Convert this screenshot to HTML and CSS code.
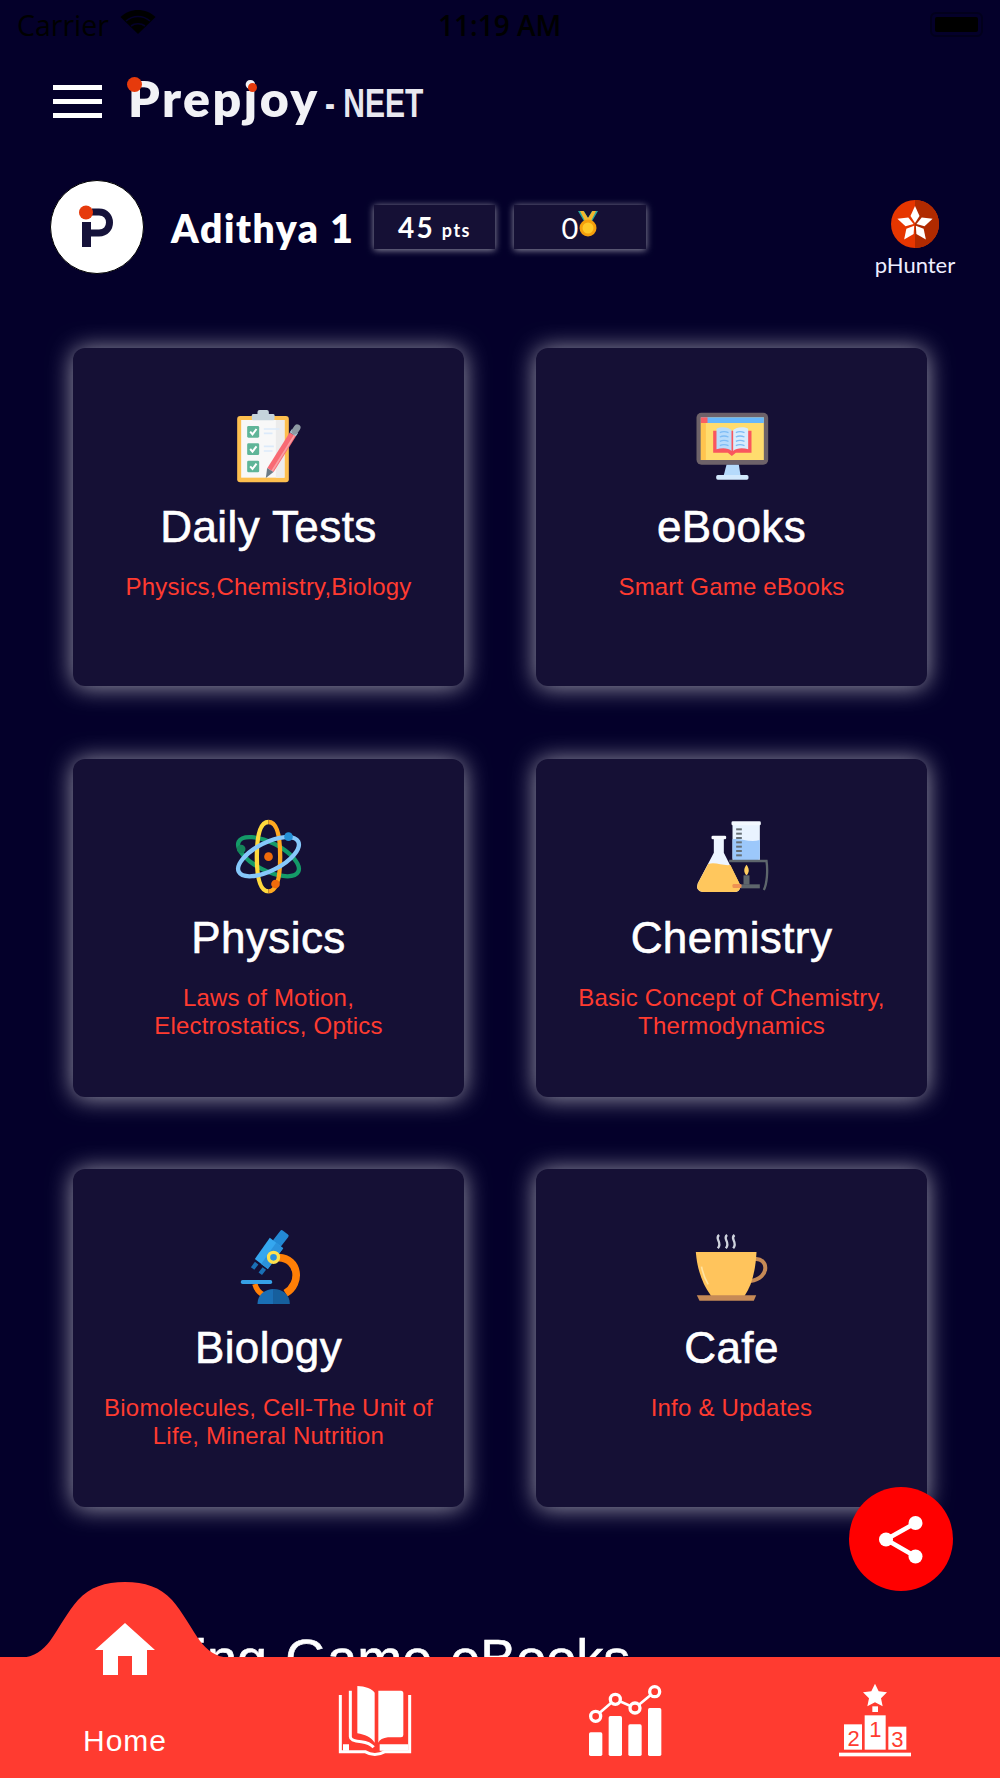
FILE: index.html
```html
<!DOCTYPE html>
<html lang="en">
<head>
<meta charset="utf-8">
<title>Prepjoy NEET</title>
<link rel="stylesheet" href="styles.css">
</head>
<body>
<div class="page">
  <div class="status">
    <div class="status-left"><span class="carrier">Carrier</span>
      <svg class="wifi" width="36" height="26" viewBox="0 0 36 26"><path d="M18 25 L0.500 8 C10 -1.500 26 -1.500 35.500 8 Z" fill="#000"/><path d="M6 12 C13 6 23 6 30 12" stroke="#04002a" stroke-width="1.600" fill="none"/><path d="M11 17 C15 14 21 14 25 17" stroke="#04002a" stroke-width="1.600" fill="none"/></svg>
    </div>
    <span class="time">11:19 AM</span>
    <div class="battery"><div class="battery-fill"></div></div>
  </div>

  <header class="topbar">
    <div class="burger"><span></span><span></span><span></span></div>
    <div class="logo"><span class="logo-dot"></span><span class="logo-dot2"></span><span class="logo-word">Prepjoy</span><span class="logo-neet">- NEET</span></div>
  </header>

  <section class="profile">
    <div class="avatar">
      <svg width="60" height="60" viewBox="0 0 60 60"><path d="M19.500 25 V50" stroke="#15123a" stroke-width="9" fill="none"/><path d="M25 15 H32 C46 15 46 36 32 36 H24" stroke="#15123a" stroke-width="7" fill="none"/><circle cx="19" cy="15.500" r="7" fill="#e63a0c"/></svg>
    </div>
    <div class="name">Adithya 1</div>
    <div class="chip chip-pts"><span class="num">45</span><span class="pts">pts</span></div>
    <div class="chip chip-medal"><span class="zero">0</span>
      <svg width="20" height="26" viewBox="0 0 20 26"><path d="M0 0 L7 12 H13 L20 0 H14 L10 7 L6 0 Z" fill="#2aa7a0"/><path d="M2 0 L8 12 H12 L18 0 H14.500 L10 7 L5.500 0 Z" fill="#f3b52c"/><circle cx="10" cy="17" r="8.500" fill="#f59f0c"/><circle cx="10" cy="17" r="5.500" fill="#ffc928"/></svg>
    </div>
    <div class="hunter">
      <svg width="48" height="48" viewBox="0 0 48 48"><circle cx="24" cy="24" r="24" fill="#e63600"/><path d="M24 0 A24 24 0 0 1 24 48 Z" fill="#b02a00"/><g fill="#fff"><polygon points="24,6 28.500,16 24,23 19.500,16"/><polygon points="24,6 28.500,16 24,23 19.500,16" transform="rotate(72 24 24.500)"/><polygon points="24,6 28.500,16 24,23 19.500,16" transform="rotate(144 24 24.500)"/><polygon points="24,6 28.500,16 24,23 19.500,16" transform="rotate(216 24 24.500)"/><polygon points="24,6 28.500,16 24,23 19.500,16" transform="rotate(288 24 24.500)"/></g></svg>
      <span>pHunter</span>
    </div>
  </section>

  <main class="grid">
    <article class="card">
      <svg class="icon" viewBox="-4.500 0 360 330">
        <rect x="80" y="78" width="155" height="199" rx="9" fill="#fdbf4f"/>
        <rect x="92" y="90" width="130" height="173" fill="#f8f8f8"/><rect x="196" y="90" width="26" height="173" fill="#ececec"/>
        <rect x="124" y="72" width="68" height="19" rx="4" fill="#c4d3db"/><rect x="141" y="60" width="34" height="16" rx="6" fill="#c4d3db"/>
        <g fill="#5fb598"><rect x="110" y="108" width="36" height="35" rx="4"/><rect x="110" y="160" width="36" height="35" rx="4"/><rect x="110" y="212" width="36" height="35" rx="4"/></g>
        <g stroke="#fff" stroke-width="6" fill="none"><path d="M119 125 L126 133 L138 117"/><path d="M119 177 L126 185 L138 169"/><path d="M119 229 L126 237 L138 221"/></g>
        <g stroke="#dceafa" stroke-width="5"><path d="M160 117H207M160 130H186M160 169H190M160 183H186"/></g>
        <path d="M180 240 L247 133" stroke="#f86a74" stroke-width="22"/><path d="M180 240 L247 133" stroke="#f9a0a5" stroke-width="5" transform="translate(5 3)"/>
        <path d="M247 133 L253 124" stroke="#b7dbe4" stroke-width="22"/><path d="M253 124 L260 113" stroke="#8d9aa3" stroke-width="20" stroke-linecap="round"/>
        <polygon points="170,234 189,246 166,264" fill="#6d7b85"/>
      </svg>
      <h2>Daily Tests</h2>
      <p>Physics,Chemistry,Biology</p>
    </article>
    <article class="card">
      <svg class="icon" viewBox="4.500 0 360 330">
        <rect x="78" y="68" width="215" height="156" rx="15" fill="#6d6269"/>
        <rect x="91" y="82" width="189" height="128" fill="#ffdc6e"/><rect x="91" y="98" width="15" height="112" fill="#ffc44f"/>
        <rect x="91" y="82" width="189" height="17" fill="#66b7fb"/><rect x="91" y="82" width="20" height="17" fill="#f95e63"/>
        <path d="M128 122 H243 V188 H196 L184 198 L172 188 H128 Z" fill="#f9565e"/>
        <path d="M138 116 C155 108 175 112 183 120 V183 C175 174 155 172 138 178 Z" fill="#b9dcfb"/><path d="M188 120 C196 112 218 108 233 116 V178 C218 172 196 174 188 183 Z" fill="#d8ecfd"/>
        <g stroke="#7dbcf5" stroke-width="4" fill="none"><path d="M148 128q12-6 26 0M148 141q12-6 26 0M148 154q12-6 26 0M148 167q12-6 26 0M196 128q12-6 26 0M196 141q12-6 26 0M196 154q12-6 26 0M196 167q12-6 26 0"/></g>
        <polygon points="168,224 205,224 210,255 160,255" fill="#b5dafb"/><rect x="137" y="255" width="97" height="14" rx="5" fill="#d2e9fd"/>
      </svg>
      <h2>eBooks</h2>
      <p>Smart Game eBooks</p>
    </article>
    <article class="card">
      <svg class="icon" viewBox="-4.500 3 360 330">
        <g fill="none" stroke-width="13">
          <ellipse cx="174" cy="170" rx="100" ry="42" transform="rotate(27 174 170)" stroke="#149a68"/>
          <path d="M174 66 C145 66 139 120 139 170 C139 220 145 274 174 274" stroke="#ffd93d"/><path d="M174 66 C203 66 209 120 209 170 C209 220 203 274 174 274" stroke="#ffa820"/>
          <ellipse cx="174" cy="170" rx="100" ry="42" transform="rotate(-27 174 170)" stroke="#86c8fb"/>
        </g>
        <circle cx="174" cy="170" r="13" fill="#ef6a0b"/><circle cx="234" cy="110" r="13" fill="#2490d6"/><circle cx="92" cy="147" r="13" fill="#15845a"/><circle cx="195" cy="252" r="13" fill="#ef6a0b"/>
      </svg>
      <h2>Physics</h2>
      <p>Laws of Motion,<br>Electrostatics, Optics</p>
    </article>
    <article class="card">
      <svg class="icon" viewBox="4.500 3 360 330">
        <rect x="186" y="70" width="82" height="110" fill="#e9f3ff"/>
        <path d="M186 118 C210 112 235 130 268 120 V174 Q268 180 262 180 H192 Q186 180 186 174 Z" fill="#9cc8fb"/>
        <rect x="183" y="64" width="88" height="12" rx="4" fill="#f3f8ff"/>
        <g fill="#666f75"><rect x="197" y="85" width="17" height="6"/><rect x="197" y="98" width="17" height="6"/><rect x="197" y="111" width="17" height="6"/><rect x="197" y="124" width="17" height="6"/><rect x="197" y="137" width="17" height="6"/><rect x="197" y="150" width="17" height="6"/><rect x="197" y="163" width="17" height="6"/></g>
        <path d="M176 183 H288 C292 210 290 250 280 270" stroke="#5e666c" stroke-width="7" fill="none"/>
        <rect x="210" y="253" width="58" height="12" fill="#5e666c"/><rect x="219" y="226" width="18" height="28" fill="#5e666c"/>
        <path d="M228 194 C236 205 238 216 228 226 C218 216 220 205 228 194 Z" fill="#ffcf5f"/>
        <path d="M130 112 H160 V158 L206 250 Q214 272 196 276 H96 Q74 272 82 250 L130 158 Z" fill="#edf5ff"/>
        <rect x="123" y="107" width="44" height="11" rx="4" fill="#f8fbff"/>
        <path d="M113 192 C135 185 155 198 180 195 L208 252 Q214 272 196 276 H96 Q74 272 82 250 Z" fill="#ffc75d"/>
        <rect x="186" y="252" width="27" height="12" rx="4" fill="#ee9152"/>
      </svg>
      <h2>Chemistry</h2>
      <p>Basic Concept of Chemistry, Thermodynamics</p>
    </article>
    <article class="card">
      <svg class="icon" viewBox="-4.500 -12 360 330">
        <path d="M205 128 C265 130 275 205 225 235" stroke="#ff7f06" stroke-width="23" fill="none"/>
        <path d="M133 207 C138 225 148 235 160 240" stroke="#ff7f06" stroke-width="16" fill="none"/>
        <rect x="91" y="195" width="94" height="12" rx="5" fill="#36a0e6"/>
        <path d="M141 267 C141 238 165 222 190 222 V267 Z" fill="#1a6fb5"/><path d="M190 222 C215 222 238 238 238 267 H190 Z" fill="#165f9d"/>
        <rect x="126" y="142" width="13" height="20" transform="rotate(37 132 152)" fill="#1a6fb5"/><rect x="149" y="158" width="13" height="20" transform="rotate(37 155 168)" fill="#1a6fb5"/>
        <rect x="196" y="48" width="30" height="44" rx="5" transform="rotate(38 211 70)" fill="#2389d4"/>
        <polygon points="178,68 218,100 172,162 133,132" fill="#35a7ef"/><polygon points="197,83 218,100 172,162 152,147" fill="#2b92dc"/>
        <circle cx="189" cy="127" r="15" fill="#2b92dc" stroke="#ffe14d" stroke-width="10"/>
      </svg>
      <h2>Biology</h2>
      <p>Biomolecules, Cell-The Unit of Life, Mineral Nutrition</p>
    </article>
    <article class="card">
      <svg class="icon" viewBox="4.500 -12 360 330">
        <path d="M250 133 C295 125 300 190 240 198" stroke="#c68a56" stroke-width="12" fill="none"/>
        <path d="M76 111 H258 C255 165 245 210 222 243 H122 C97 210 80 165 76 111 Z" fill="#ffc45c"/>
        <path d="M93 155 C97 175 103 192 113 208" stroke="#ffe39f" stroke-width="5" fill="none"/>
        <polygon points="79,241 257,241 250,257 87,257" fill="#c68a56"/>
        <g stroke="#cfd3dd" stroke-width="7" fill="none"><path d="M146 60 C130 72 158 80 142 100"/><path d="M170 60 C154 72 182 80 166 100"/><path d="M192 60 C176 72 204 80 188 100"/></g>
      </svg>
      <h2>Cafe</h2>
      <p>Info &amp; Updates</p>
    </article>
  </main>

  <h1 class="section-title">Trending Game eBooks</h1>

  <button class="fab" aria-label="Share">
    <svg width="104" height="104" viewBox="0 0 104 104"><path d="M66.500 36 L37 52.500 L66.500 69.500" stroke="#fff" stroke-width="4.500" fill="none"/><circle cx="66.500" cy="36" r="7" fill="#fff"/><circle cx="37" cy="52.500" r="7" fill="#fff"/><circle cx="66.500" cy="69.500" r="7" fill="#fff"/></svg>
  </button>

  <nav class="tabbar">
    <div class="tab tab-home">
      <svg class="hump" width="250" height="76" viewBox="0 0 250 76"><path d="M20 76 C35 75 43 68 50 59 C58 48 68 29 78 18 C90 5 105 0 125 0 C145 0 160 5 172 18 C182 29 192 48 200 59 C207 68 215 75 230 76 Z" fill="#ff3b30"/></svg>
      <svg class="home-icon" width="60" height="52" viewBox="0 0 60 52"><path d="M30 0 L60 27 H52 V52 H37 V33 H23 V52 H8 V27 H0 Z" fill="#fff"/></svg>
      <span class="home-label">Home</span>
    </div>
    <div class="tab">
      <svg class="tab-icon" viewBox="976 351 300 300">
        <path d="M1073 378 C1095 378 1120 388 1125 398 V548 C1115 532 1095 523 1073 520 Z" fill="#fff"/>
        <path d="M1136 392 H1204 Q1211 392 1211 400 V525 Q1211 532 1204 532 H1165 Q1142 535 1136 548 Z" fill="#fff"/>
        <path d="M1052 392 V530 Q1052 543 1085 545 Q1110 548 1122 562" stroke="#fff" stroke-width="9" fill="none"/>
        <path d="M1022 405 V575 H1096 Q1125 592 1156 575 H1230 V405" stroke="#fff" stroke-width="9" fill="none"/>
        <path d="M1030 553 H1048 V572 H1030 Z M1140 553 H1226 V572 H1140 Z" fill="#fff"/>
      </svg>
    </div>
    <div class="tab">
      <svg class="tab-icon" viewBox="226 650 300 300">
        <g fill="#fff"><rect x="268" y="816" width="40" height="71" rx="5"/><rect x="327" y="767" width="40" height="120" rx="5"/><rect x="386" y="792" width="40" height="95" rx="5"/><rect x="445" y="743" width="40" height="144" rx="5"/></g>
        <path d="M288 768 L347 717 L406 743 L465 694" stroke="#fff" stroke-width="8" fill="none"/>
        <g fill="#ff3b30" stroke="#fff" stroke-width="10"><circle cx="288" cy="768" r="15"/><circle cx="347" cy="717" r="15"/><circle cx="406" cy="743" r="15"/><circle cx="465" cy="694" r="15"/></g>
      </svg>
    </div>
    <div class="tab">
      <svg class="tab-icon" viewBox="976 650 300 300">
        <polygon points="1126,670 1137,693 1162,696 1144,714 1149,738 1126,726 1103,738 1108,714 1090,696 1115,693" fill="#fff"/>
        <rect x="1118" y="738" width="17" height="17" fill="#fff"/>
        <g fill="#fff"><rect x="1095" y="765" width="63" height="103"/><rect x="1033" y="792" width="54" height="76"/><rect x="1166" y="799" width="54" height="69"/><rect x="1018" y="877" width="216" height="11"/></g>
        <g class="rank"><text x="1127" y="830" text-anchor="middle">1</text><text x="1062" y="857" text-anchor="middle">2</text><text x="1193" y="859" text-anchor="middle">3</text></g>
      </svg>
    </div>
  </nav>
</div>
</body>
</html>
```

FILE: styles.css
```css
* { box-sizing: border-box; }
html, body { margin: 0; padding: 0; }
body { background: #04002a; font-family: "Liberation Sans", Arial, sans-serif; }

.page {
  position: relative;
  width: 1000px;
  height: 1778px;
  overflow: hidden;
  background: #04002a;
  color: #fff;
}

/* status bar */
.status {
  display: flex;
  align-items: center;
  justify-content: space-between;
  height: 50px;
  padding: 0 17px;
  color: #000;
  position: relative;
}
.status-left { display: flex; align-items: center; gap: 11px; }
.carrier { font: 400 28.500px "Open Sans", sans-serif; }
.wifi { margin-top: -6px; }
.time { position: absolute; left: 438px; top: 7px; font: 600 28px/36px "Open Sans", sans-serif; }
.battery {
  width: 53px;
  height: 25px;
  border: 2px solid #02001c;
  border-radius: 6px;
  padding: 3px;
  margin-top: -2px;
}
.battery-fill { width: 100%; height: 100%; background: #000; border-radius: 2px; }

/* header */
.topbar {
  display: flex;
  align-items: center;
  gap: 26px;
  padding: 20px 0 0 53px;
  height: 82px;
}
.burger { display: flex; flex-direction: column; gap: 9px; width: 49px; }
.burger span { display: block; height: 5px; background: #fff; }
.logo { position: relative; display: flex; align-items: baseline; height: 60px; margin-top: -4px; }
.logo-word { font: 800 50px/58px "Lato", sans-serif; letter-spacing: 2.500px; color: #f2f2f6; }
.logo-neet {
  display: inline-block;
  font: 700 40px/58px "Liberation Sans", sans-serif;
  margin-left: 5px;
  color: #e8e8f0;
  transform: scaleX(0.75);
  transform-origin: left center;
}
.logo-dot { position: absolute; left: -1px; top: 8px; width: 15px; height: 15px; border-radius: 50%; background: #e63a0c; }
.logo-dot2 { position: absolute; left: 120px; top: 14px; width: 9px; height: 9px; border-radius: 50%; background: #e63a0c; }

/* profile */
.profile {
  display: flex;
  align-items: center;
  height: 92px;
  margin-top: 49px;
  padding: 0 43px 0 50px;
}
.avatar {
  width: 94px;
  height: 94px;
  border-radius: 50%;
  background: #fff;
  border: 1px solid #000;
  display: flex;
  align-items: center;
  justify-content: center;
  flex: none;
}
.name { margin-left: 27px; width: 182px; padding-top: 2px; font: 800 39px/48px "Lato", sans-serif; letter-spacing: 1.600px; white-space: nowrap; }
.chip {
  display: flex;
  align-items: center;
  justify-content: center;
  height: 44px;
  background: #151035;
  box-shadow: 0 1px 7px rgba(255, 255, 255, 0.6);
}
.chip-pts { width: 121px; margin-left: 21px; gap: 7px; }
.chip-medal { width: 132px; margin-left: 19px; }
.num { font: 700 28px "Lato", sans-serif; letter-spacing: 2.200px; }
.pts { font: 700 18px "Lato", sans-serif; letter-spacing: 1.500px; margin-top: 6px; }
.zero { font: 400 29px "Lato", sans-serif; }
.chip-medal svg { margin-top: -6px; }
.hunter {
  margin-left: auto;
  width: 84px;
  align-self: flex-start;
  margin-top: 19px;
  display: flex;
  flex-direction: column;
  align-items: center;
  gap: 3px;
}
.hunter span { font: 400 22px/28px "Lato", sans-serif; color: #eef; }

/* cards */
.grid {
  display: grid;
  grid-template-columns: repeat(2, 391px);
  grid-auto-rows: 338px;
  gap: 72.500px 72px;
  padding: 0 73px;
  margin-top: 75px;
}
.card {
  background: #151035;
  border-radius: 12px;
  box-shadow: 0 1px 24px rgba(255, 255, 255, 0.62);
  padding: 42px 24px 0;
  text-align: center;
}
.icon { display: block; width: 120px; height: 110px; margin: 0 auto; }
.card h2 {
  margin: 0;
  font: 400 44px/54px "Liberation Sans", sans-serif;
  letter-spacing: 0.400px;
  -webkit-text-stroke: 0.600px #fff;
}
.card p {
  margin: 19px 0 0;
  font: 400 24px/28px "Liberation Sans", sans-serif;
  letter-spacing: 0.200px;
  color: #ff3b30;
}

.section-title {
  margin: 0;
  position: absolute;
  left: 56px;
  top: 1628px;
  font: 400 54px/60px "Liberation Sans", sans-serif;
  word-spacing: 3px;
  -webkit-text-stroke: 0.600px #fff;
  color: #fff;
  white-space: nowrap;
}

/* floating share */
.fab {
  position: absolute;
  left: 849px;
  top: 1487px;
  width: 104px;
  height: 104px;
  padding: 0;
  border: 0;
  border-radius: 50%;
  background: #ff0000;
  z-index: 3;
}
.fab svg { display: block; }

/* tab bar */
.tabbar {
  position: absolute;
  left: 0;
  right: 0;
  bottom: 0;
  height: 121px;
  display: grid;
  grid-template-columns: repeat(4, 250px);
  background: #ff3b30;
  z-index: 2;
}
.tab { position: relative; padding-top: 20px; display: flex; justify-content: center; }
.tab-icon { display: block; width: 100px; height: 100px; }
.hump { position: absolute; left: 0; top: -75px; }
.home-icon { position: absolute; left: 95px; top: -34px; }
.home-label { position: absolute; left: 0; width: 100%; text-align: center; top: 65px; font: 400 30px/38px "Liberation Sans", sans-serif; letter-spacing: 1px; }
.rank text { fill: #ff3b30; font: 400 66px "Liberation Sans", sans-serif; }
```
